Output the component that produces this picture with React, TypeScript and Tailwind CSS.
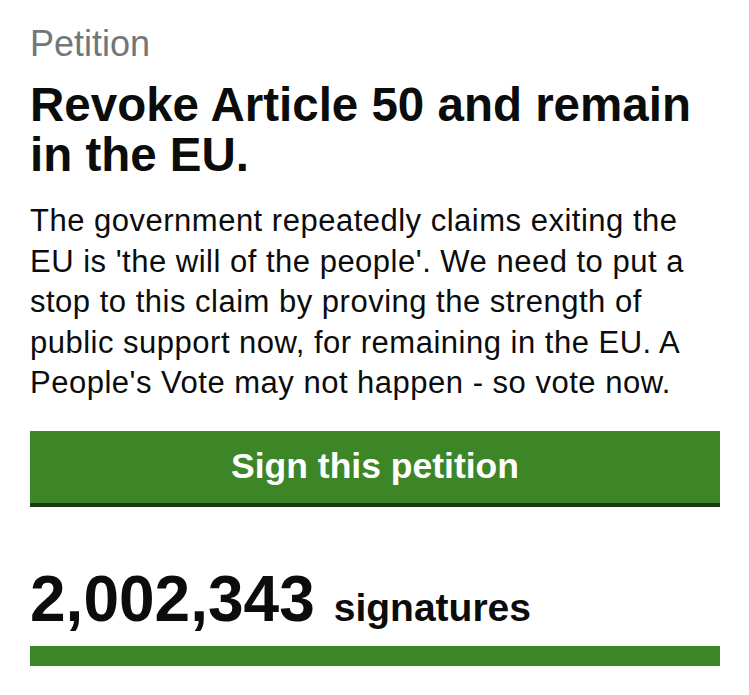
export default function App() {
  return (
    <div className="min-h-screen bg-white font-['Liberation_Sans',Arial,sans-serif] text-[#0b0c0c]">
      <main className="pl-[30px] pr-[29px] pt-[24px]">
        <div className="text-[36px] leading-[40px] text-[#6f777b]">Petition</div>

        <h1 className="mt-[16px] text-[47.5px] font-bold leading-[50px]">
          Revoke Article 50 and remain in the EU.
        </h1>

        <p className="mt-[21px] text-[31px] leading-[40.5px] tracking-[0.5px]">
          The government repeatedly claims exiting the EU is 'the will of the people'. We need to
          put a stop to this claim by proving the strength of public support now, for remaining in
          the EU. A People's Vote may not happen - so vote now.
        </p>

        <button
          type="button"
          className="mt-[27px] flex h-[76px] w-full items-center justify-center border-b-4 border-[#1a3b10] bg-[#3d8628] text-[35.5px] font-bold text-white"
        >
          Sign this petition
        </button>

        <div className="mt-[60px] flex items-baseline gap-[19px]">
          <span className="text-[64px] font-bold leading-[64px]">2,002,343</span>
          <span className="text-[39px] font-bold">signatures</span>
        </div>

        <div className="mt-[9px] h-[20px] w-full bg-[#3d8628]" />
      </main>
    </div>
  );
}
